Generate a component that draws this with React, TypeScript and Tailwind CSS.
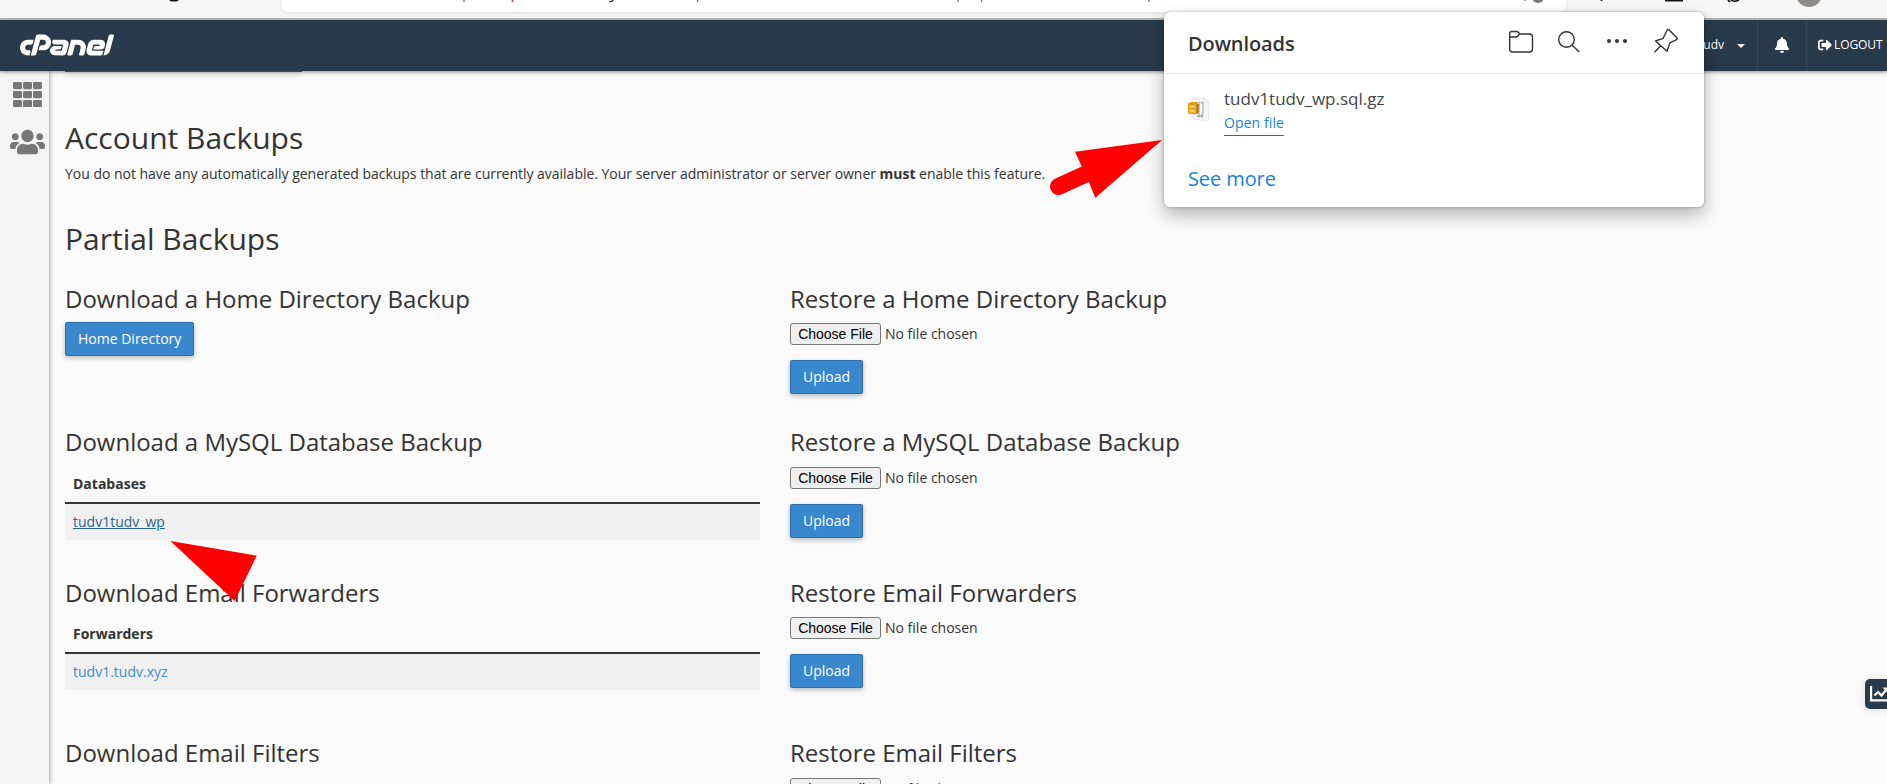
import { SiCpanel } from 'react-icons/si';
import { FaBell, FaSignOutAlt, FaUsers } from 'react-icons/fa';

function SectionTitle({ children }: { children: string }) {
  return <h3 className="text-[24px] leading-[26px] tracking-[-0.01px]">{children}</h3>;
}

function PrimaryButton({ label }: { label: string }) {
  return (
    <button className="block h-[34px] rounded-[2px] border border-[#2a6eb0] bg-[#3988ce] px-3 text-[14px] leading-none text-white shadow-[0_2px_5px_rgba(0,0,0,0.26)]">
      {label}
    </button>
  );
}

function Restore({ title, gap }: { title: string; gap: string }) {
  return (
    <section className="w-[695px]">
      <SectionTitle>{title}</SectionTitle>
      <div className={`flex h-[22px] items-center gap-1 ${gap}`}>
        <button className="h-[22px] w-[91px] whitespace-nowrap rounded-[3px] border border-[#767676] bg-[#efefef] font-['Liberation_Sans',sans-serif] text-[14px] leading-none text-black">
          Choose File
        </button>
        <span className="text-[14px] leading-[20px]">No file chosen</span>
      </div>
      <div className="mt-[15px]">
        <PrimaryButton label="Upload" />
      </div>
    </section>
  );
}

interface LinkTableProps {
  title: string;
  heading: string;
  link: string;
  gap: string;
  active?: boolean;
}

function LinkTable({ title, heading, link, gap, active }: LinkTableProps) {
  return (
    <section className="w-[695px]">
      <SectionTitle>{title}</SectionTitle>
      <div className={`h-[38px] border-b-2 border-[#333] px-2 pt-[8px] text-[14px] font-bold leading-[20px] ${gap}`}>{heading}</div>
      <div className="h-[36px] bg-[#f0f0f0] px-2 pt-[8px] text-[14px] leading-[20px]">
        <a className={active ? 'text-[#2a6496] underline' : 'text-[#428bca]'}>{link}</a>
      </div>
    </section>
  );
}

function BrowserStrip() {
  return (
    <div className="relative flex h-[20px] shrink-0 border-b-2 border-[#c0bfba] bg-[#f7f7f7] pl-[282px]">
      <div className="h-[12px] w-[1284px] rounded-b-md bg-white shadow-[0_1px_5px_rgba(0,0,0,0.1)]" />
      <svg className="absolute left-0 top-0" width="1887" height="12" fill="none">
        <ellipse cx="174" cy="-1" rx="5" ry="2.6" fill="#111" />
        <path d="M464 0v2M697.5 0v2M958 0v2M981.5 0v2M1149 0v2M1525 0v1" stroke="#777" strokeWidth="1.4" />
        <path d="M512.5 0v2" stroke="#d8432e" strokeWidth="1.6" />
        <path d="M613 0q-1 2-3.500 1.500" stroke="#222" strokeWidth="1.4" />
        <circle cx="1538" cy="-3" r="6" fill="#777" />
        <path d="M1601.500 0v1" stroke="#222" strokeWidth="2" />
        <path d="M1665 .7h18" stroke="#111" strokeWidth="1.6" />
        <path d="M1728 0q1 1.500 2.500 1.500M1731 0q3 2.500 8 0" stroke="#111" strokeWidth="1.500" />
        <circle cx="1809" cy="-6" r="13" fill="#8f8b88" />
      </svg>
    </div>
  );
}

function Header() {
  return (
    <header className="z-10 flex h-[51px] shrink-0 items-center bg-[#293a4a] pl-[20px] text-[12px] font-medium text-white shadow-[0_1px_4px_rgba(0,0,0,0.45)]">
      <SiCpanel size={94} className="-mt-[2px]" />
      <div className="ml-auto flex h-full items-center pr-[12px]">
        <span className="-mt-px">tudv1tudv</span>
        <svg className="ml-[13px] mt-px" width="8" height="4" viewBox="0 0 8 4" fill="currentColor">
          <path d="M0 0h8L4 4z" />
        </svg>
      </div>
      <div className="flex h-full w-[49px] items-center justify-center border-l border-[#34495c]">
        <FaBell size={16} className="-mt-[2px]" />
      </div>
      <div className="flex h-full w-[81px] items-center gap-[2px] border-l border-[#34495c] pl-[11px]">
        <FaSignOutAlt size={14} className="-mt-[2px]" />
        <span className="-mt-px tracking-[-0.1px]">LOGOUT</span>
      </div>
    </header>
  );
}

function Sidebar() {
  const cells = [0, 1, 2];
  return (
    <aside className="flex w-[49px] shrink-0 flex-col items-start bg-[#f4f4f4] text-[#777] shadow-[1px_0_4px_rgba(0,0,0,0.35)]">
      <svg className="ml-[13px] mt-[11px]" width="29" height="25" fill="currentColor">
        {cells.map((row) => cells.map((col) => <rect key={`${row}-${col}`} x={col * 10} y={row * 9} width="9" height="7.200" rx="1.400" />))}
      </svg>
      <FaUsers className="ml-[10px] mt-[21px] h-[28px] w-[35px]" />
    </aside>
  );
}

function DownloadsPopover() {
  return (
    <div className="absolute left-[1164px] top-[12px] z-20 h-[195px] w-[540px] rounded-[6px] bg-white shadow-[0_8px_18px_rgba(0,0,0,0.28),0_0_3px_rgba(0,0,0,0.3)]">
      <div className="flex h-[62px] items-center border-b border-[#e5e5e5] pl-[24px] pr-[23px]">
        <span className="mt-[2px] text-[20px] font-semibold leading-[26px] tracking-[-0.1px] text-[#333]">Downloads</span>
        <svg className="-mt-[4px] ml-auto" width="174" height="28" viewBox="1507 27 174 28" fill="none" stroke="#333" strokeWidth="1.400" strokeLinejoin="round">
          <path d="M1509.700 36v-2.500a2 2 0 0 1 2-2h4.800c1 0 1.500.3 2 1l1 1.500h10a3 3 0 0 1 3 3v12a3 3 0 0 1-3 3h-16.800a3 3 0 0 1-3-3zM1509.700 37h6.300c1 0 1.500-.4 2-1l1.500-2" />
          <circle cx="1566.500" cy="39.500" r="7.800" />
          <path d="m1572.200 45.200 7 6.800" />
          <g fill="#333" stroke="none">
            <circle cx="1609" cy="41" r="2" />
            <circle cx="1617" cy="41" r="2" />
            <circle cx="1625" cy="41" r="2" />
          </g>
          <path d="m1669 29.800 8 8.200c.6.600.4 1.200-.4 1.600l-6.600 3.200-3 8.400-11.500-10.200 7.600-2.700 4-8.100c.4-.8 1.200-1 1.900-.4zM1661.300 45.200l-6.800 7" />
        </svg>
      </div>
      <div className="flex pl-[23px] pt-[12px]">
        <svg className="mt-[10px]" width="25" height="27" viewBox="0 0 25 27">
          <path d="M6 2h11l4.500 4 .5 17.500-2 1.500L6 23z" fill="#f1f6f7" stroke="#d9e2e4" strokeWidth=".8" />
          <path d="m17 2 .3 4.200 4.200-.2z" fill="#fff" stroke="#cfd9dc" strokeWidth=".6" />
          <path d="M12 6.500h4v12M10 20h7M12 8v14M15 18v3.500" fill="none" stroke="#999" strokeWidth="1.400" strokeDasharray="1.500 .8" />
          <path d="M1 7.500 4 6h6l2 1.500v9L9 18.500l-8-1z" fill="#e79a12" />
          <path d="M2 9h7v3H2zM2 13.500h7v3H2z" fill="#f8bd2f" />
          <path d="M4 10.500h3M4 15h3" stroke="#fff3c4" strokeWidth="1" />
          <path d="M9.500 8v10l2-1.500V8z" fill="#8d7a54" />
        </svg>
        <div className="ml-[12px] flex flex-col items-start">
          <span className="text-[17px] leading-[25px] text-[#444]">tudv1tudv_wp.sql.gz</span>
          <a className="h-[25px] border-b border-[#0078d4] text-[14px] leading-[24px] tracking-[0.1px] text-[#1683d8]">Open file</a>
        </div>
      </div>
      <a className="ml-[24px] mt-[30px] block text-[20px] leading-[26px] tracking-[-0.1px] text-[#1683d8]">See more</a>
    </div>
  );
}

export default function App() {
  return (
    <div className="relative flex h-[784px] w-[1887px] flex-col overflow-hidden bg-[#fafafa] font-['Open_Sans',sans-serif] text-[#333]">
      <BrowserStrip />
      <Header />
      <div className="flex min-h-0 flex-1">
        <Sidebar />
        <main className="flex-1 overflow-hidden pl-[16px]">
          <div className="h-px w-[237px] bg-[#2a6eb0] shadow-[0_2px_5px_rgba(0,0,0,0.4)]" />
          <h2 className="mt-[49px] text-[30px] leading-[33px]">Account Backups</h2>
          <p className="mt-[10px] text-[14px] leading-[20px] tracking-[-0.02px]">
            You do not have any automatically generated backups that are currently available. Your server administrator or server owner <b>must</b> enable this feature.
          </p>
          <h2 className="mt-[38px] text-[30px] leading-[33px]">Partial Backups</h2>
          <div className="mt-[31px] flex h-[143px] gap-[30px]">
            <section className="w-[695px]">
              <SectionTitle>Download a Home Directory Backup</SectionTitle>
              <div className="mt-[10px]">
                <PrimaryButton label="Home Directory" />
              </div>
            </section>
            <Restore title="Restore a Home Directory Backup" gap="mt-[11px]" />
          </div>
          <div className="flex h-[151px] gap-[30px]">
            <LinkTable title="Download a MySQL Database Backup" heading="Databases" link="tudv1tudv_wp" gap="mt-[11px]" active />
            <Restore title="Restore a MySQL Database Backup" gap="mt-[12px]" />
          </div>
          <div className="flex h-[160px] gap-[30px]">
            <LinkTable title="Download Email Forwarders" heading="Forwarders" link="tudv1.tudv.xyz" gap="mt-[10px]" />
            <Restore title="Restore Email Forwarders" gap="mt-[11px]" />
          </div>
          <div className="flex gap-[30px]">
            <section className="w-[695px]">
              <SectionTitle>Download Email Filters</SectionTitle>
            </section>
            <Restore title="Restore Email Filters" gap="mt-[12px]" />
          </div>
        </main>
      </div>

      <DownloadsPopover />

      <svg className="pointer-events-none absolute left-0 top-0 z-30" width="1200" height="784" fill="#f00">
        <path d="M1162 140 1075 151.700 1081.600 166.300 1089 182.300 1095.300 197.700z" />
        <path d="M1058.500 186.500 1087 173.500" stroke="#f00" strokeWidth="17" strokeLinecap="round" />
        <path d="M170.400 541 256.700 555.700 234.600 601z" />
      </svg>

      <div className="absolute right-0 top-[679px] flex h-[30px] w-[22px] items-center overflow-hidden rounded-l-[5px] bg-[#293a4a] pl-[5px] shadow-[0_0_10px_rgba(0,0,0,0.12)]">
        <svg className="shrink-0" width="17" height="16" fill="none" stroke="#fff" strokeWidth="2.200">
          <path d="M1.100 0v14.400H17" />
          <path d="m4.500 9.500 3.500-3.500 3.500 3.500 4-5" />
          <path d="M12.500 1.500H17V6z" fill="#fff" stroke="none" />
        </svg>
      </div>
    </div>
  );
}
